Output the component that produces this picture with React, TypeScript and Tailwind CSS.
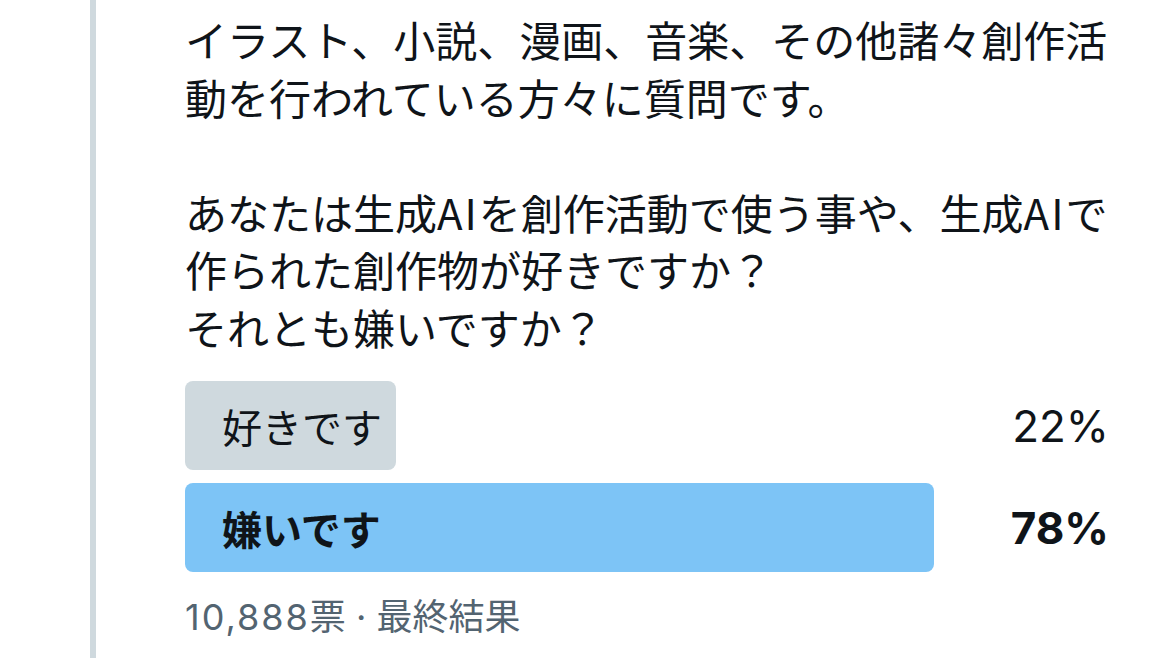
export default function App() {
  const font = { fontFamily: '"Noto Sans CJK JP", "Noto Sans", sans-serif' };
  const latin = { fontFamily: 'Inter, "Noto Sans CJK JP", sans-serif' };
  const ai = <span className="tracking-[2px]">AI</span>;
  return (
    <div className="flex h-[658px] w-[1169px] overflow-hidden bg-white pl-[90px] text-[#0f1419]" style={font}>
      <div className="w-[6px] shrink-0 bg-[#cfd9de]" />
      <div className="ml-[89px] w-[925px] pt-[10px]">
        <p className="whitespace-nowrap text-[42px] leading-[57.5px]">
          イラスト、小説、漫画、音楽、その他諸々創作活
          <br />
          動を行われている方々に質問です。
          <br />
          <br />
          あなたは生成{ai}を創作活動で使う事や、生成{ai}で
          <br />
          作られた創作物が好きですか？
          <br />
          それとも嫌いですか？
        </p>

        <div className="mt-[26px] flex flex-col gap-[13px]">
          <div className="flex items-center justify-between">
            <div className="flex h-[89px] w-[211px] items-center rounded-[8px] bg-[#cfd9de] pl-[37px] text-[40px]">
              好きです
            </div>
            <span className="mr-[1px] text-[44px]" style={latin}>22%</span>
          </div>
          <div className="flex items-center justify-between">
            <div className="flex h-[89px] w-[749px] items-center rounded-[8px] bg-[#7dc4f6] pl-[37px] text-[40px] font-bold">
              嫌いです
            </div>
            <span className="mr-[1px] text-[44px] font-bold" style={latin}>78%</span>
          </div>
        </div>

        <div className="mt-[23px] text-[36px] leading-[44px] text-[#536471]" style={latin}>
          <span className="tracking-[2px]">10,888</span>票 · 最終結果
        </div>
      </div>
    </div>
  );
}
